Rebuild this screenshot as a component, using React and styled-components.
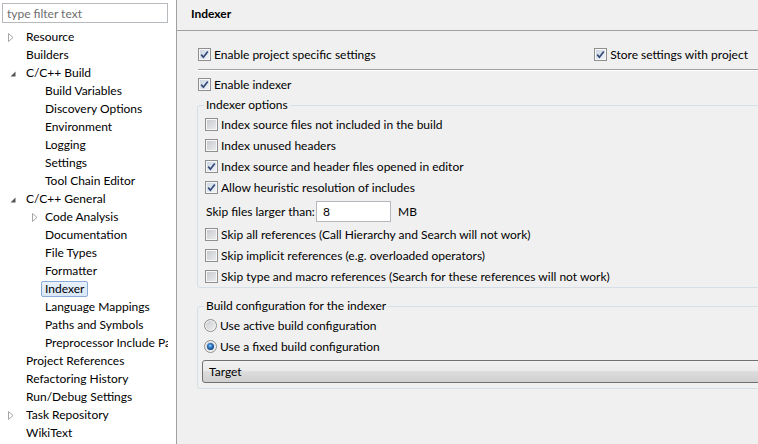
import React from 'react';
import styled, { createGlobalStyle } from 'styled-components';

const GlobalStyle = createGlobalStyle`
  html, body {
    margin: 0;
    padding: 0;
  }
  body {
    font-family: Lato, "Noto Sans", sans-serif;
    font-size: 12px;
    color: #000;
    background: #f0f0f0;
  }
`;

const Window = styled.div`
  display: flex;
  width: 758px;
  height: 444px;
  overflow: hidden;
`;

/* ---------- left tree ---------- */

const Sidebar = styled.div`
  width: 176px;
  flex: none;
  background: #fff;
  border-right: 1px solid #a0a0a0;
  display: flex;
  flex-direction: column;
  overflow: hidden;
`;

const Filter = styled.input`
  box-sizing: border-box;
  width: 166px;
  height: 20px;
  margin: 3px 0 0 2px;
  padding: 0 4px;
  border: 1px solid #b5b8bd;
  background: #fff;
  font: 12px Lato, "Noto Sans", sans-serif;
  outline: none;
  &::placeholder {
    color: #6d6d6d;
  }
`;

const Tree = styled.div`
  width: 168px;
  overflow: hidden;
  padding-top: 5px;
  display: flex;
  flex-direction: column;
`;

const TreeRow = styled.div`
  height: 18px;
  display: flex;
  align-items: center;
  padding-left: ${(p) => p.$level * 19 + 3}px;
  white-space: nowrap;
`;

const Toggle = styled.span`
  box-sizing: border-box;
  width: 19px;
  height: 18px;
  flex: none;
  display: flex;
  align-items: center;
  padding-left: ${(p) => p.$level * 5 + 5}px;
`;

const NodeLabel = styled.span`
  padding: 0 3px;
  line-height: 14px;
  border: 1px solid ${(p) => (p.$selected ? '#8aabd6' : 'transparent')};
  border-radius: 2px;
  background: ${(p) => (p.$selected ? 'linear-gradient(#e8f1fc, #d9e7f8)' : 'none')};
`;

const Collapsed = () => (
  <svg width="6" height="9" viewBox="0 0 6 9">
    <polygon points="0.5,0.5 5,4.5 0.5,8.5" fill="#fff" stroke="#a6a6a6" />
  </svg>
);

const Expanded = () => (
  <svg width="8" height="8" viewBox="0 0 8 8">
    <polygon points="7.5,2.5 7.5,7.5 2.5,7.5" fill="#555" />
  </svg>
);

const tree = [
  { label: 'Resource', level: 0, state: 'closed' },
  { label: 'Builders', level: 0 },
  { label: 'C/C++ Build', level: 0, state: 'open' },
  { label: 'Build Variables', level: 1 },
  { label: 'Discovery Options', level: 1 },
  { label: 'Environment', level: 1 },
  { label: 'Logging', level: 1 },
  { label: 'Settings', level: 1 },
  { label: 'Tool Chain Editor', level: 1 },
  { label: 'C/C++ General', level: 0, state: 'open' },
  { label: 'Code Analysis', level: 1, state: 'closed' },
  { label: 'Documentation', level: 1 },
  { label: 'File Types', level: 1 },
  { label: 'Formatter', level: 1 },
  { label: 'Indexer', level: 1, selected: true },
  { label: 'Language Mappings', level: 1 },
  { label: 'Paths and Symbols', level: 1 },
  { label: 'Preprocessor Include Paths, Macros etc.', level: 1 },
  { label: 'Project References', level: 0 },
  { label: 'Refactoring History', level: 0 },
  { label: 'Run/Debug Settings', level: 0 },
  { label: 'Task Repository', level: 0, state: 'closed' },
  { label: 'WikiText', level: 0 },
];

/* ---------- right page ---------- */

const Main = styled.div`
  flex: 1;
  min-width: 0;
  overflow: hidden;
  display: flex;
  flex-direction: column;
`;

const Header = styled.div`
  height: 31px;
  flex: none;
  box-sizing: border-box;
  padding: 6px 0 0 14px;
  line-height: 16px;
  font-weight: bold;
  border-bottom: 1px solid #a0a0a0;
`;

const Body = styled.div`
  padding: 13px 0 0 21px;
  display: flex;
  flex-direction: column;
`;

const TopRow = styled.div`
  display: flex;
  justify-content: space-between;
  padding-right: 10px;
`;

const Row = styled.div`
  height: ${(p) => p.$h || 21}px;
  display: flex;
  align-items: center;
  padding-left: ${(p) => p.$indent || 0}px;
  white-space: nowrap;
`;

const Separator = styled.div`
  height: 0;
  border-top: 1px solid #a0a0a0;
  border-bottom: 1px solid #fff;
  margin: 4px -20px 3px 0;
`;

const Group = styled.fieldset`
  margin: ${(p) => p.$top}px -20px 0 -1px;
  padding: 1px 0 ${(p) => p.$bottom || 0}px 6px;
  border: 1px solid #d5dfe5;
  border-radius: 3px;
  min-width: 0;
  display: flex;
  flex-direction: column;
`;

const Legend = styled.legend`
  padding: 0 2px;
  line-height: 16px;
`;

const Box = styled.span`
  box-sizing: border-box;
  width: 13px;
  height: 13px;
  flex: none;
  margin-right: 3px;
  border: 1px solid #8f8f8f;
  box-shadow: inset 0 0 0 1px #f7f7f7;
  background: ${(p) =>
    p.$checked
      ? 'linear-gradient(135deg, #c9d3e0, #f3f6f9)'
      : 'linear-gradient(135deg, #c3c6cb, #eeeeee)'};
  display: flex;
  align-items: center;
  justify-content: center;
`;

const CheckBox = ({ checked, children }) => (
  <>
    <Box $checked={checked}>
      {checked && (
        <svg width="11" height="11" viewBox="0 0 11 11">
          <path d="M2.2 5.6 L4.4 8.2 L8.8 2.4" fill="none" stroke="#34497a" strokeWidth="1.7" />
        </svg>
      )}
    </Box>
    {children}
  </>
);

const RadioCircle = styled.span`
  box-sizing: border-box;
  width: 13px;
  height: 13px;
  flex: none;
  margin-right: 3px;
  border-radius: 50%;
  border: 1px solid #8f8f8f;
  box-shadow: inset 0 0 0 1px #f4f4f4;
  background: linear-gradient(135deg, #c6c9ce, #f2f2f2);
  display: flex;
  align-items: center;
  justify-content: center;
`;

const Dot = styled.span`
  width: 7px;
  height: 7px;
  border-radius: 50%;
  background: radial-gradient(circle at 45% 40%, #a9dcff 0, #3a8ad6 1.5px, #1b4f8c 3.5px);
`;

const Radio = ({ checked, children }) => (
  <>
    <RadioCircle>{checked && <Dot />}</RadioCircle>
    {children}
  </>
);

const SizeLabel = styled.span`
  width: 110px;
  flex: none;
`;

const SizeInput = styled.div`
  box-sizing: border-box;
  width: 75px;
  height: 21px;
  border: 1px solid #b5b8bd;
  background: #fff;
  padding-left: 6px;
  display: flex;
  align-items: center;
  margin-right: 7px;
`;

const Combo = styled.div`
  box-sizing: border-box;
  height: 23px;
  margin: 3px 0 0 -2px;
  padding-left: 6px;
  border: 1px solid #707070;
  border-radius: 3px;
  display: flex;
  align-items: center;
  background: linear-gradient(#f2f2f2 0%, #ebebeb 45%, #dddddd 50%, #cfcfcf 100%);
`;

export default function App() {
  return (
    <Window>
      <GlobalStyle />
      <Sidebar>
        <Filter placeholder="type filter text" />
        <Tree>
          {tree.map((n) => (
            <TreeRow key={n.label} $level={n.level}>
              <Toggle $level={n.level}>
                {n.state === 'closed' && <Collapsed />}
                {n.state === 'open' && <Expanded />}
              </Toggle>
              <NodeLabel $selected={n.selected}>{n.label}</NodeLabel>
            </TreeRow>
          ))}
        </Tree>
      </Sidebar>

      <Main>
        <Header>Indexer</Header>
        <Body>
          <TopRow>
            <Row>
              <CheckBox checked>Enable project specific settings</CheckBox>
            </Row>
            <Row>
              <CheckBox checked>Store settings with project</CheckBox>
            </Row>
          </TopRow>
          <Separator />
          <Row>
            <CheckBox checked>Enable indexer</CheckBox>
          </Row>

          <Group $top={2}>
            <Legend>Indexer options</Legend>
            <Row $indent={1}>
              <CheckBox>Index source files not included in the build</CheckBox>
            </Row>
            <Row $indent={1}>
              <CheckBox>Index unused headers</CheckBox>
            </Row>
            <Row $indent={1}>
              <CheckBox checked>Index source and header files opened in editor</CheckBox>
            </Row>
            <Row $indent={1}>
              <CheckBox checked>Allow heuristic resolution of includes</CheckBox>
            </Row>
            <Row $h={26} $indent={2}>
              <SizeLabel>Skip files larger than:</SizeLabel>
              <SizeInput>8</SizeInput>
              <span>MB</span>
            </Row>
            <Row $indent={1}>
              <CheckBox>Skip all references (Call Hierarchy and Search will not work)</CheckBox>
            </Row>
            <Row $indent={1}>
              <CheckBox>Skip implicit references (e.g. overloaded operators)</CheckBox>
            </Row>
            <Row $indent={1}>
              <CheckBox>Skip type and macro references (Search for these references will not work)</CheckBox>
            </Row>
          </Group>

          <Group $top={10} $bottom={5}>
            <Legend>Build configuration for the indexer</Legend>
            <Row>
              <Radio>Use active build configuration</Radio>
            </Row>
            <Row>
              <Radio checked>Use a fixed build configuration</Radio>
            </Row>
            <Combo>Target</Combo>
          </Group>
        </Body>
      </Main>
    </Window>
  );
}
